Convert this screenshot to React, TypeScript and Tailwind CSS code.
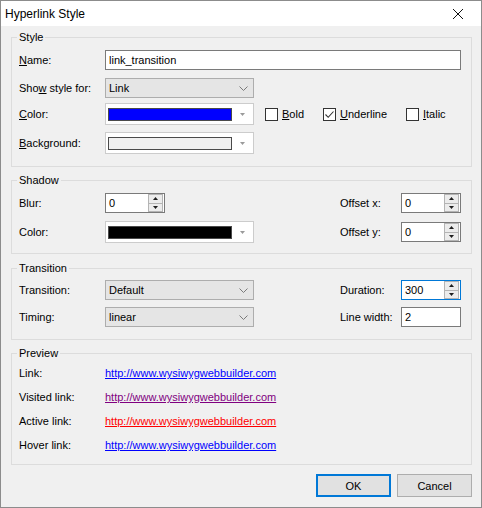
import React from 'react';

type Kids = { children?: React.ReactNode };

// label with one underlined access-key letter
function Lbl({ text, at }: { text: string; at?: number }) {
    if (at === undefined) return <span>{text}</span>;
    return (
        <span>
            {text.slice(0, at)}
            <span className="underline underline-offset-[1px]">{text[at]}</span>
            {text.slice(at + 1)}
        </span>
    );
}

function Group({
    title,
    className,
    children,
}: Kids & { title: string; className: string }) {
    return (
        <fieldset className={`border border-[#dcdcdc] pl-[7px] pr-[10px] ${className}`}>
            <legend className="-ml-[2px] px-[2px] leading-4">{title}</legend>
            {children}
        </fieldset>
    );
}

const Chevron = () => (
    <svg width="9" height="5" viewBox="0 0 9 5" className="shrink-0">
        <path d="M0.5 0.5 L4.5 4.5 L8.5 0.5" fill="none" stroke="#7a7a7a" strokeWidth="1" />
    </svg>
);

function Combo({ value }: { value: string }) {
    return (
        <div className="flex h-full w-[149px] items-center justify-between border border-[#adadad] bg-[#e5e5e5] pl-[3px] pr-[5px]">
            <span>{value}</span>
            <Chevron />
        </div>
    );
}

function ColorCombo({ swatch }: { swatch: string }) {
    return (
        <div className="flex h-full w-[149px] items-center border border-[#cccccc] bg-white pl-[2px]">
            <div className={`h-[13px] w-[124px] border border-[#4a4a4a] ${swatch}`} />
            <div className="flex flex-1 justify-center">
                <svg width="5" height="3" viewBox="0 0 5 3">
                    <path d="M0 0 L5 0 L2.5 3Z" fill="#9a9a9a" />
                </svg>
            </div>
        </div>
    );
}

const Tri = ({ up }: { up?: boolean }) => (
    <svg width="5" height="3" viewBox="0 0 5 3">
        <path d={up ? 'M2.5 0 L5 3 L0 3Z' : 'M0 0 L5 0 L2.5 3Z'} fill="#1e1e1e" />
    </svg>
);

function SpinBox({ value, focused }: { value: string; focused?: boolean }) {
    return (
        <div
            className={`flex h-[20px] w-[60px] items-center border bg-white pl-[3px] pr-[1px] ${
                focused ? 'border-[#0078d7]' : 'border-[#7a7a7a]'
            }`}
        >
            <span className="flex-1">{value}</span>
            <div className="flex h-[18px] w-[15px] flex-col border border-[#b4b4b4] bg-[#ececec]">
                <div className="flex flex-1 items-center justify-center border-b border-[#b4b4b4]">
                    <Tri up />
                </div>
                <div className="flex flex-1 items-center justify-center">
                    <Tri />
                </div>
            </div>
        </div>
    );
}

function TextBox({ value, className }: { value: string; className: string }) {
    return (
        <div className={`flex h-[20px] items-center border border-[#7a7a7a] bg-white pl-[3px] ${className}`}>
            {value}
        </div>
    );
}

function Check({ label, at, checked }: { label: string; at: number; checked?: boolean }) {
    return (
        <div className="flex items-center gap-[4px]">
            <div className="flex h-[13px] w-[13px] items-center justify-center border border-[#333333] bg-white">
                {checked && (
                    <svg width="11" height="11" viewBox="0 0 11 11">
                        <path d="M1.5 5.5 L4.2 8.3 L9.5 2.5" fill="none" stroke="#333333" strokeWidth="1.1" />
                    </svg>
                )}
            </div>
            <Lbl text={label} at={at} />
        </div>
    );
}

const LinkRow = ({ label, color }: { label: string; color: string }) => (
    <div className="flex h-[24px] items-center">
        <span className="w-[86px]">{label}</span>
        <span className={`underline ${color}`}>http://www.wysiwygwebbuilder.com</span>
    </div>
);

export default function App() {
    return (
        <div className="flex h-[508px] w-[482px] flex-col border border-[#8c8c8c] bg-[#f0f0f0] font-['Liberation_Sans',Arial,sans-serif] text-[11px] leading-4 text-black">
            {/* title bar */}
            <div className="flex h-[25px] items-center bg-white pl-[4px]">
                <span className="flex-1 text-[12px]">Hyperlink Style</span>
                <div className="flex h-full w-[46px] items-center justify-center">
                    <svg width="10" height="10" viewBox="0 0 10 10">
                        <path d="M0 0 L10 10 M10 0 L0 10" stroke="#111111" strokeWidth="1" />
                    </svg>
                </div>
            </div>

            <div className="flex flex-1 flex-col pl-[10px] pr-[9px] pt-[3px]">
                <Group title="Style" className="pb-[12px]">
                    <div className="mt-[5px] flex h-[20px] items-center">
                        <span className="w-[86px]">
                            <Lbl text="Name:" at={0} />
                        </span>
                        <TextBox value="link_transition" className="flex-1" />
                    </div>
                    <div className="mt-[8px] flex h-[20px] items-center">
                        <span className="w-[86px]">
                            <Lbl text="Show style for:" at={3} />
                        </span>
                        <Combo value="Link" />
                    </div>
                    <div className="mt-[5px] flex h-[22px] items-center">
                        <span className="w-[86px]">
                            <Lbl text="Color:" at={0} />
                        </span>
                        <ColorCombo swatch="bg-[#0000ff]" />
                        <div className="ml-[11px] w-[58px]">
                            <Check label="Bold" at={0} />
                        </div>
                        <div className="w-[83px]">
                            <Check label="Underline" at={0} checked />
                        </div>
                        <Check label="Italic" at={0} />
                    </div>
                    <div className="mt-[7px] flex h-[22px] items-center">
                        <span className="w-[86px]">
                            <Lbl text="Background:" at={0} />
                        </span>
                        <ColorCombo swatch="bg-[#f0f0f0]" />
                    </div>
                </Group>

                <Group title="Shadow" className="mt-[5px] pb-[10px]">
                    <div className="mt-[5px] flex h-[20px] items-center">
                        <span className="w-[86px]">Blur:</span>
                        <SpinBox value="0" />
                        <div className="flex-1" />
                        <span className="w-[61px]">Offset x:</span>
                        <SpinBox value="0" />
                    </div>
                    <div className="mt-[8px] flex h-[22px] items-center">
                        <span className="w-[86px]">Color:</span>
                        <ColorCombo swatch="bg-black" />
                        <div className="flex-1" />
                        <span className="w-[61px]">Offset y:</span>
                        <SpinBox value="0" />
                    </div>
                </Group>

                <Group title="Transition" className="mt-[6px] pb-[12px]">
                    <div className="mt-[4px] flex h-[20px] items-center">
                        <span className="w-[86px]">Transition:</span>
                        <Combo value="Default" />
                        <div className="flex-1" />
                        <span className="w-[61px]">Duration:</span>
                        <SpinBox value="300" focused />
                    </div>
                    <div className="mt-[7px] flex h-[20px] items-center">
                        <span className="w-[86px]">Timing:</span>
                        <Combo value="linear" />
                        <div className="flex-1" />
                        <span className="w-[61px]">Line width:</span>
                        <TextBox value="2" className="w-[60px]" />
                    </div>
                </Group>

                <Group title="Preview" className="mt-[5px] pb-[7px]">
                    <LinkRow label="Link:" color="text-[#0000ff]" />
                    <LinkRow label="Visited link:" color="text-[#800080]" />
                    <LinkRow label="Active link:" color="text-[#ff0000]" />
                    <LinkRow label="Hover link:" color="text-[#0000ff]" />
                </Group>

                <div className="mt-[9px] flex justify-end gap-[6px]">
                    <button className="h-[23px] w-[75px] border-2 border-[#0078d7] bg-[#e1e1e1]">OK</button>
                    <button className="h-[23px] w-[75px] border border-[#adadad] bg-[#e1e1e1]">Cancel</button>
                </div>
            </div>
        </div>
    );
}
